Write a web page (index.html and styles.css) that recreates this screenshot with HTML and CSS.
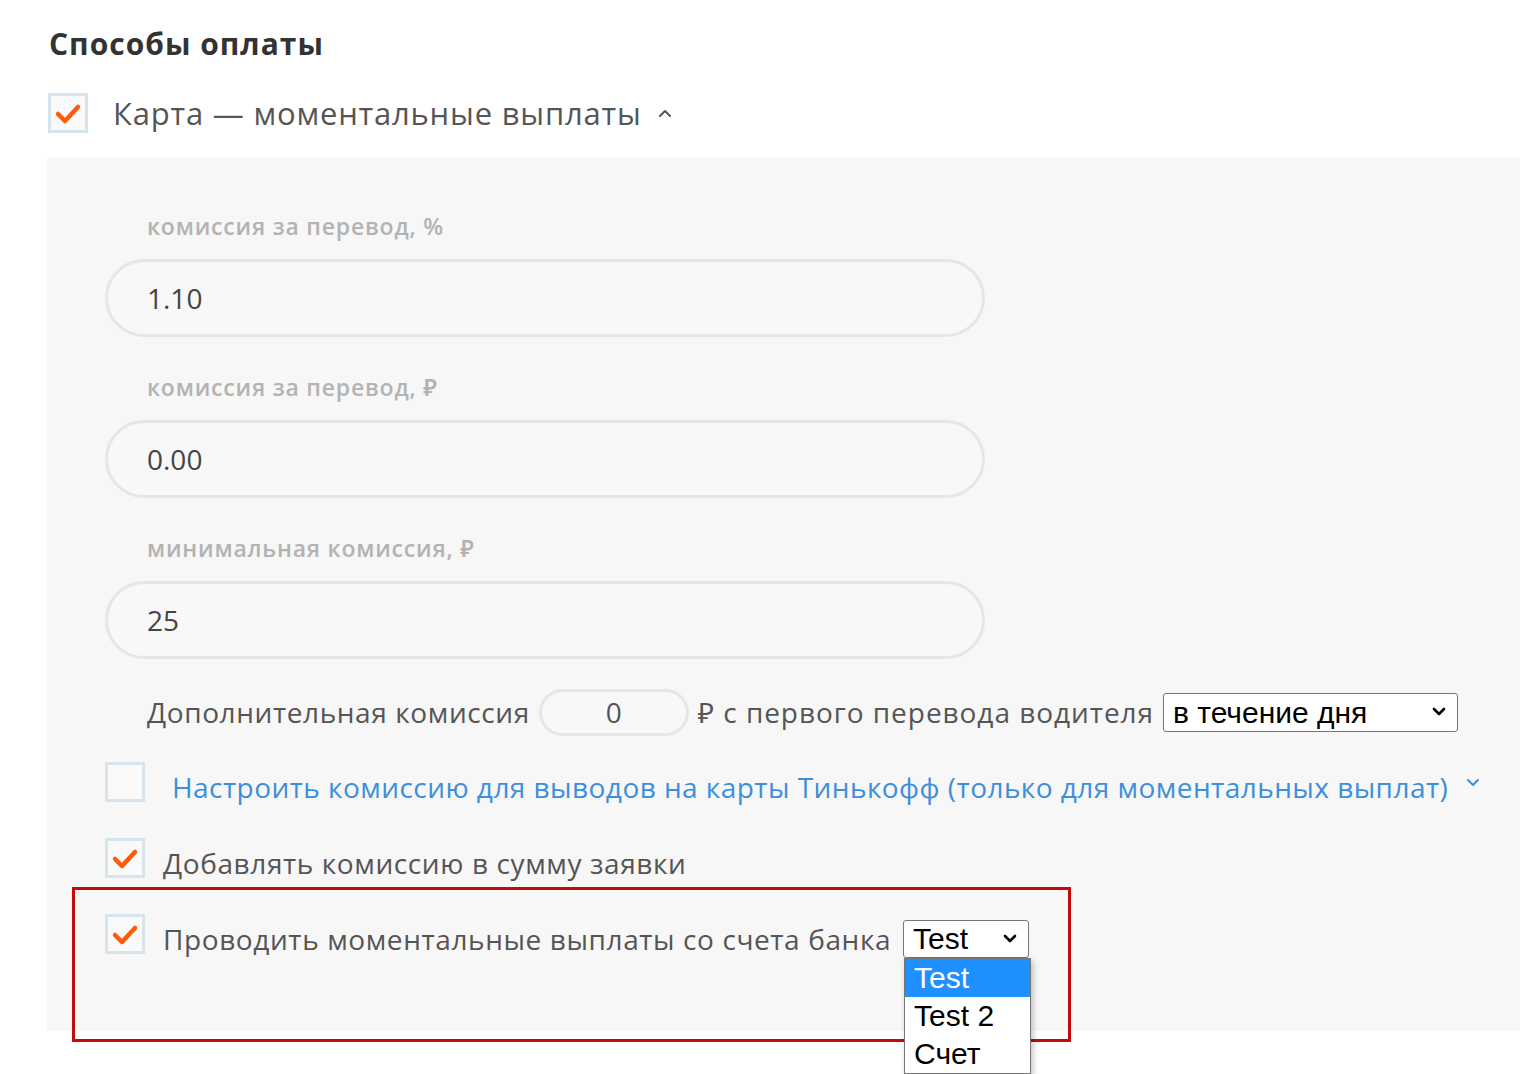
FILE: index.html
```html
<!DOCTYPE html>
<html lang="ru">
<head>
    <meta charset="UTF-8">
    <meta name="viewport" content="width=device-width, initial-scale=1.0">
    <title>Способы оплаты</title>
    <link rel="stylesheet" href="styles.css">
</head>
<body>
    <div class="payments">
        <h2 class="payments-title">Способы оплаты</h2>

        <!-- Заголовок способа оплаты -->
        <label class="method-head">
            <span class="check is-checked">
                <svg viewBox="0 0 40 40" width="40" height="40"><polyline points="10,21 17,28 30,14" /></svg>
            </span>
            <span class="method-name">Карта — моментальные выплаты</span>
            <svg class="caret" viewBox="0 0 14 10" width="14" height="10"><polyline points="2,8 7,3 12,8" /></svg>
        </label>

        <div class="panel">
            <div class="field">
                <div class="field-label">комиссия за перевод, %</div>
                <input class="field-input" type="text" value="1.10">
            </div>
            <div class="field">
                <div class="field-label">комиссия за перевод, ₽</div>
                <input class="field-input" type="text" value="0.00">
            </div>
            <div class="field">
                <div class="field-label">минимальная комиссия, ₽</div>
                <input class="field-input" type="text" value="25">
            </div>

            <div class="extra-row">
                <span>Дополнительная комиссия</span>
                <input class="small-input" type="text" value="0">
                <span class="extra-tail">₽ с первого перевода водителя</span>
                <span class="select-wrap select-period">
                    <select class="native-select">
                        <option>в течение дня</option>
                    </select>
                    <svg class="select-arrow" viewBox="0 0 14 10" width="14" height="10"><polyline points="2,2 7,7 12,2" /></svg>
                </span>
            </div>

            <label class="check-row">
                <span class="check"></span>
                <span class="check-text link">Настроить комиссию для выводов на карты Тинькофф (только для моментальных выплат)</span>
                <svg class="caret caret-blue" viewBox="0 0 14 10" width="14" height="10"><polyline points="2,3 7,8 12,3" /></svg>
            </label>

            <label class="check-row">
                <span class="check is-checked">
                    <svg viewBox="0 0 40 40" width="40" height="40"><polyline points="10,21 17,28 30,14" /></svg>
                </span>
                <span class="check-text">Добавлять комиссию в сумму заявки</span>
            </label>

            <div class="check-row bank-row">
                <div class="annotation"></div>
                <span class="check is-checked">
                    <svg viewBox="0 0 40 40" width="40" height="40"><polyline points="10,21 17,28 30,14" /></svg>
                </span>
                <span class="check-text">Проводить моментальные выплаты со счета банка</span>
                <span class="select-wrap select-bank">
                    <select class="native-select">
                        <option>Test</option>
                        <option>Test 2</option>
                        <option>Счет</option>
                    </select>
                    <svg class="select-arrow" viewBox="0 0 14 10" width="14" height="10"><polyline points="2,2 7,7 12,2" /></svg>
                    <!-- открытый список -->
                    <div class="options">
                        <div class="option is-active">Test</div>
                        <div class="option">Test 2</div>
                        <div class="option">Счет</div>
                    </div>
                </span>
            </div>
        </div>
    </div>
</body>
</html>
```

FILE: styles.css
```css
body {
    margin: 0;
    min-height: 1074px;
    background-color: #fff;
    font-family: "Open Sans", "Noto Sans", sans-serif;
    color: #555;
}
.payments {
    padding-top: 21px;
}
.payments-title {
    margin: 0 0 0 49px;
    font-size: 30px;
    font-weight: 700;
    letter-spacing: 1px;
    color: #333;
    line-height: 46px;
}
.method-head {
    display: flex;
    align-items: center;
    margin: 26px 0 0 48px;
    height: 40px;
}
.method-name {
    margin-left: 25px;
    font-size: 31px;
    letter-spacing: 0.8px;
    color: #555;
}
.caret {
    margin-left: 16px;
    fill: none;
    stroke: #555;
    stroke-width: 2;
    stroke-linecap: round;
    stroke-linejoin: round;
}
.caret-blue {
    stroke: #3d8fdb;
    margin-left: 18px;
}

/* серая панель с настройками */
.panel {
    margin: 24px 0 0 47px;
    padding: 54px 0 77px 58px;
    background-color: #f7f7f7;
}
.field + .field {
    margin-top: 35px;
}
.field-label {
    padding-left: 42px;
    font-size: 23px;
    line-height: 30px;
    font-weight: 600;
    letter-spacing: 0.8px;
    color: #b3b3b3;
}
.field-input {
    display: block;
    margin-top: 18px;
    width: 880px;
    height: 78px;
    padding: 0 0 0 39px;
    box-sizing: border-box;
    border: 3px solid #e6e6e6;
    border-radius: 39px;
    background-color: #f8f8f8;
    font-family: inherit;
    font-size: 28px;
    color: #444;
    outline: none;
}
.extra-row {
    display: flex;
    align-items: center;
    margin-top: 29px;
    padding-left: 42px;
    height: 48px;
    font-size: 28px;
    letter-spacing: 0.6px;
    color: #555;
}
.extra-tail {
    letter-spacing: 0.95px;
}
.small-input {
    width: 150px;
    height: 47px;
    margin: 0 9px 0 9px;
    box-sizing: border-box;
    border: 3px solid #e6e6e6;
    border-radius: 24px;
    background-color: #f8f8f8;
    text-align: center;
    font-family: inherit;
    font-size: 28px;
    color: #555;
    outline: none;
}
.select-wrap {
    position: relative;
    display: inline-block;
    letter-spacing: 0;
}
.select-period {
    margin-left: 9px;
}
.native-select {
    -webkit-appearance: none;
    appearance: none;
    display: block;
    box-sizing: border-box;
    border: 1px solid #767676;
    border-radius: 3px;
    background-color: #fff;
    font-family: "Liberation Sans", Arial, sans-serif;
    font-size: 30px;
    color: #000;
    padding: 0 0 0 9px;
    outline: none;
}
.select-period .native-select {
    width: 295px;
    height: 39px;
}
.select-arrow {
    position: absolute;
    right: 12px;
    top: 50%;
    margin-top: -5px;
    fill: none;
    stroke: #000;
    stroke-width: 2.6;
    stroke-linecap: round;
    stroke-linejoin: round;
    pointer-events: none;
}

/* строки с чекбоксами */
.check-row {
    display: flex;
    align-items: center;
    height: 40px;
    margin-top: 36px;
    font-size: 28px;
    letter-spacing: 0.6px;
}
.check-row:first-of-type {
    margin-top: 26px;
}
.check {
    flex: none;
    width: 40px;
    height: 40px;
    box-sizing: border-box;
    border: 3px solid #d6e4ed;
    background-color: #fafafa;
}
.check svg {
    display: block;
    margin: -3px;
    fill: none;
    stroke: #ff5a0a;
    stroke-width: 4.5;
    stroke-linecap: round;
    stroke-linejoin: round;
}
.check-text {
    margin-left: 18px;
    padding-top: 9px;
    color: #555;
}
.check-text.link {
    margin-left: 27px;
    letter-spacing: 0.45px;
    color: #3d8fdb;
}
.bank-row {
    position: relative;
}
.annotation {
    position: absolute;
    left: -33px;
    top: -27px;
    width: 999px;
    height: 155px;
    box-sizing: border-box;
    border: 3px solid #c40a0a;
    pointer-events: none;
}
.select-bank {
    margin-left: 12px;
    margin-top: 9px;
}
.select-bank .native-select {
    width: 126px;
    height: 38px;
}
.options {
    position: absolute;
    left: 1px;
    top: 38px;
    width: 125px;
    border: 1px solid #767676;
    background-color: #fff;
    box-shadow: 2px 3px 6px rgba(0, 0, 0, 0.25);
    font-family: "Liberation Sans", Arial, sans-serif;
    font-size: 30px;
    color: #000;
}
.option {
    height: 38px;
    line-height: 38px;
    padding-left: 9px;
}
.option.is-active {
    background-color: #1e90ff;
    color: #fff;
}
```
